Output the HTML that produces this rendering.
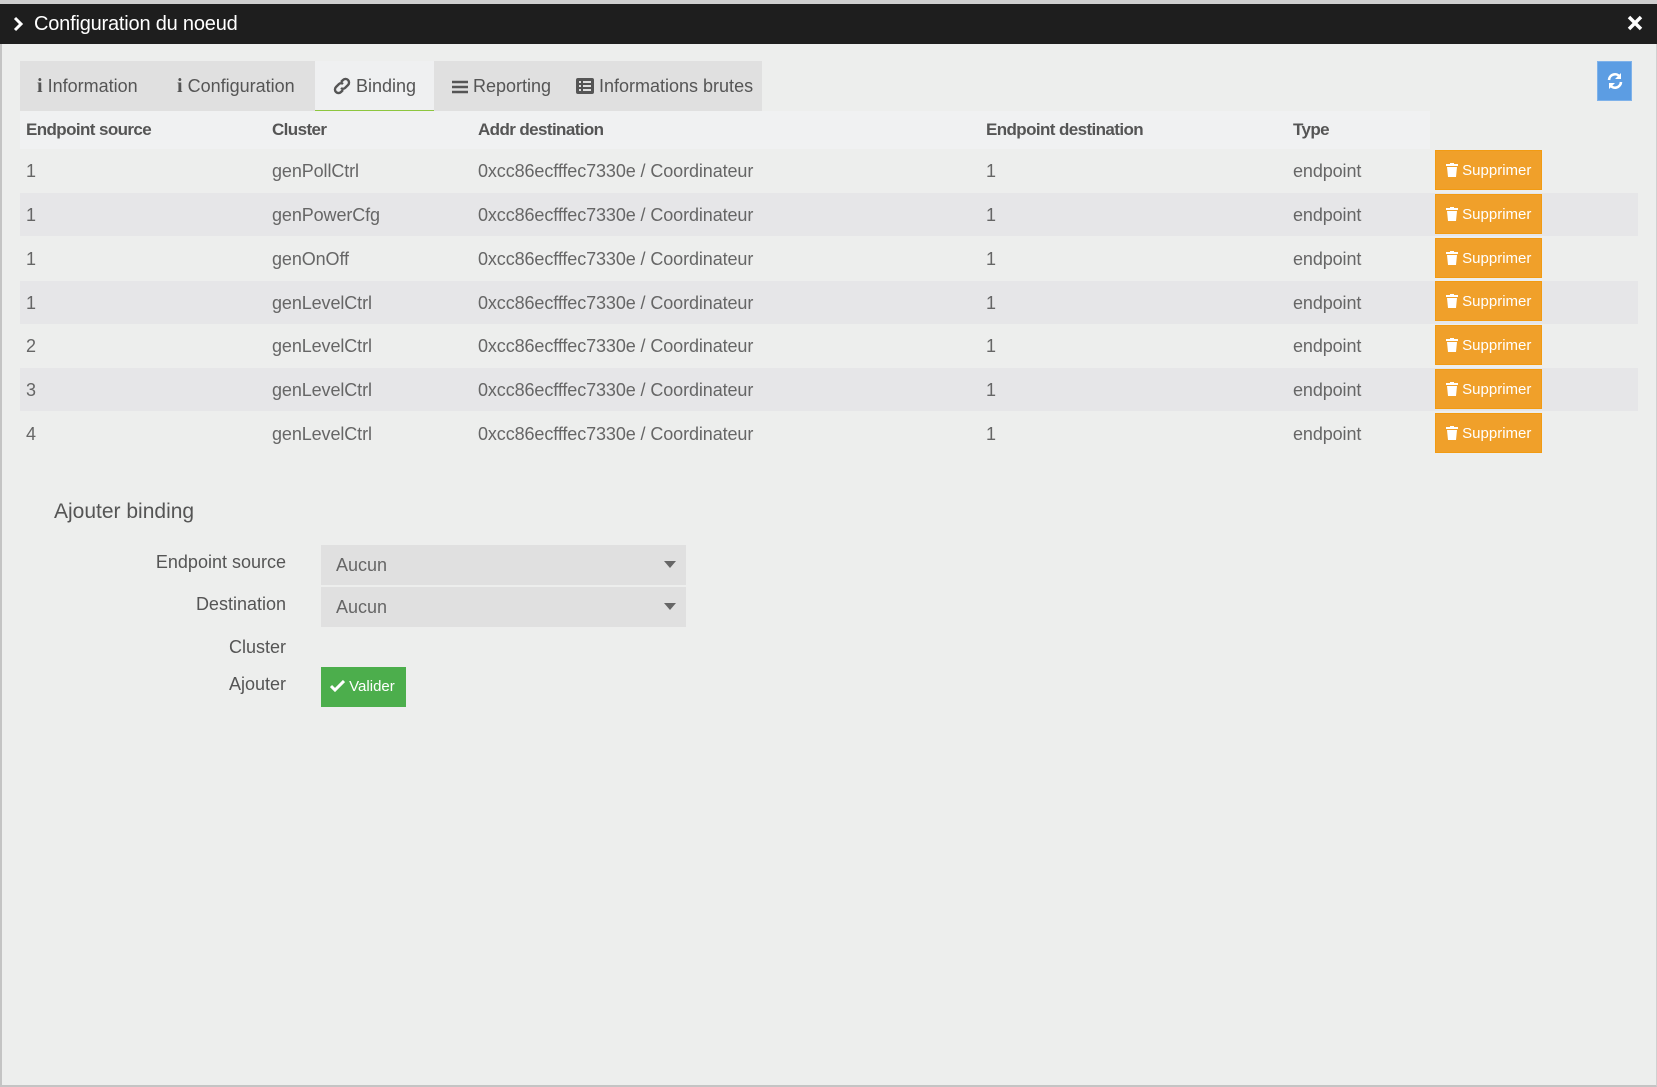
<!DOCTYPE html>
<html><head><meta charset="utf-8">
<style>
*{margin:0;padding:0;box-sizing:border-box}
html,body{width:1657px;height:1087px;overflow:hidden;background:#edeeed;font-family:"Liberation Sans",sans-serif;color:#666}
.a{position:absolute;white-space:nowrap}
#top{left:0;top:0;width:1657px;height:4px;background:#cfcfcf}
#hdr{left:0;top:4px;width:1657px;height:40px;background:#1e1e1e;color:#fff;font-size:20px;line-height:40px;padding-left:34px;letter-spacing:-0.2px}
#frame{left:0;top:44px;width:1657px;height:1043px;border-left:2px solid #c4c4c4;border-bottom:2px solid #c4c4c4;border-right:1px solid #d0d0d0}
#tabs{left:20px;top:61px;width:742px;height:50px;background:#e0e0e0}
.tab{top:61px;height:50px;line-height:50px;font-size:18px;color:#555}
#act{left:315px;top:61px;width:119px;height:51px;background:#eff0f1;border-bottom:2px solid #8dc63f}
#thead{left:20px;top:111px;width:1410px;height:38px;background:#f0f1f2}
.th{top:111px;line-height:38px;font-size:17px;font-weight:bold;color:#555;letter-spacing:-0.6px}
.stripe{left:20px;width:1618px;height:43px;background:#e6e6e8}
.td{font-size:18px;line-height:44px;color:#666;letter-spacing:-0.1px}
.btn{left:1435px;width:107px;height:40px;background:#f0a02a;border:1px solid #f29b12;color:#fff;font-size:15px;line-height:40px;padding-left:10px}
.lbl{font-size:18px;color:#555;text-align:right;width:200px;left:86px}
.sel{left:321px;width:365px;height:40px;background:#e0e0e0;font-size:18px;line-height:40px;padding-left:15px;color:#666}
.car{position:absolute;right:10px;top:16px;width:0;height:0;border-left:6px solid transparent;border-right:6px solid transparent;border-top:7px solid #666}
</style></head><body>
<div class="a" id="top"></div>
<div class="a" id="hdr">Configuration du noeud</div>
<svg class="a" style="left:12px;top:16px" width="12" height="16" viewBox="0 0 12 16"><path d="M3 2l6 6-6 6" stroke="#fff" stroke-width="3" fill="none"/></svg>
<svg class="a" style="left:1627px;top:15px" width="16" height="16" viewBox="0 0 16 16"><path d="M2 2L14 14M14 2L2 14" stroke="#fff" stroke-width="3.5"/></svg>
<div class="a" id="frame"></div>

<div class="a" id="tabs"></div>
<div class="a" id="act"></div>
<div class="a tab" style="left:37px"><b style="font-family:'Liberation Serif',serif;font-size:20px">i</b> Information</div>
<div class="a tab" style="left:177px"><b style="font-family:'Liberation Serif',serif;font-size:20px">i</b> Configuration</div>
<div class="a tab" style="left:333px">
<svg style="vertical-align:-3px" width="18" height="18" viewBox="0 0 18 18"><path d="M8 5l2-2a3 3 0 0 1 5 5l-3 3a3 3 0 0 1-4 0M10 13l-2 2a3 3 0 0 1-5-5l3-3a3 3 0 0 1 4 0" stroke="#555" stroke-width="2.4" fill="none"/></svg> Binding</div>
<div class="a tab" style="left:452px">
<svg style="vertical-align:-2px" width="16" height="14" viewBox="0 0 16 14"><path d="M0 2h16M0 7h16M0 12h16" stroke="#555" stroke-width="2.4"/></svg> Reporting</div>
<div class="a tab" style="left:576px">
<svg style="vertical-align:-2px" width="18" height="16" viewBox="0 0 18 16"><rect x="0" y="0" width="18" height="16" rx="2" fill="#555"/><path d="M3 4h2M3 8h2M3 12h2M7 4h8M7 8h8M7 12h8" stroke="#e0e0e0" stroke-width="2"/></svg> Informations brutes</div>

<div class="a" style="left:1597px;top:61px;width:35px;height:40px;background:#5c9de3;border:1px solid #7fb2ea"></div>
<svg class="a" style="left:1606px;top:72px" width="18" height="18" viewBox="0 0 18 18"><path d="M3 8a6 6 0 0 1 11-3M15 10a6 6 0 0 1-11 3" stroke="#fff" stroke-width="2.6" fill="none"/><path d="M15 1v6h-6z M3 17v-6h6z" fill="#fff"/></svg>

<div class="a" id="thead"></div>
<div class="a th" style="left:26px">Endpoint source</div>
<div class="a th" style="left:272px">Cluster</div>
<div class="a th" style="left:478px">Addr destination</div>
<div class="a th" style="left:986px">Endpoint destination</div>
<div class="a th" style="left:1293px">Type</div>

<div class="a stripe" style="top:193px"></div>
<div class="a stripe" style="top:281px"></div>
<div class="a stripe" style="top:368px"></div>

<div class="a td" style="left:26px;top:149px">1</div><div class="a td" style="left:272px;top:149px">genPollCtrl</div><div class="a td" style="left:478px;top:149px">0xcc86ecfffec7330e / Coordinateur</div><div class="a td" style="left:986px;top:149px">1</div><div class="a td" style="left:1293px;top:149px">endpoint</div>
<div class="a td" style="left:26px;top:193px">1</div><div class="a td" style="left:272px;top:193px">genPowerCfg</div><div class="a td" style="left:478px;top:193px">0xcc86ecfffec7330e / Coordinateur</div><div class="a td" style="left:986px;top:193px">1</div><div class="a td" style="left:1293px;top:193px">endpoint</div>
<div class="a td" style="left:26px;top:237px">1</div><div class="a td" style="left:272px;top:237px">genOnOff</div><div class="a td" style="left:478px;top:237px">0xcc86ecfffec7330e / Coordinateur</div><div class="a td" style="left:986px;top:237px">1</div><div class="a td" style="left:1293px;top:237px">endpoint</div>
<div class="a td" style="left:26px;top:281px">1</div><div class="a td" style="left:272px;top:281px">genLevelCtrl</div><div class="a td" style="left:478px;top:281px">0xcc86ecfffec7330e / Coordinateur</div><div class="a td" style="left:986px;top:281px">1</div><div class="a td" style="left:1293px;top:281px">endpoint</div>
<div class="a td" style="left:26px;top:324px">2</div><div class="a td" style="left:272px;top:324px">genLevelCtrl</div><div class="a td" style="left:478px;top:324px">0xcc86ecfffec7330e / Coordinateur</div><div class="a td" style="left:986px;top:324px">1</div><div class="a td" style="left:1293px;top:324px">endpoint</div>
<div class="a td" style="left:26px;top:368px">3</div><div class="a td" style="left:272px;top:368px">genLevelCtrl</div><div class="a td" style="left:478px;top:368px">0xcc86ecfffec7330e / Coordinateur</div><div class="a td" style="left:986px;top:368px">1</div><div class="a td" style="left:1293px;top:368px">endpoint</div>
<div class="a td" style="left:26px;top:412px">4</div><div class="a td" style="left:272px;top:412px">genLevelCtrl</div><div class="a td" style="left:478px;top:412px">0xcc86ecfffec7330e / Coordinateur</div><div class="a td" style="left:986px;top:412px">1</div><div class="a td" style="left:1293px;top:412px">endpoint</div>

<div class="a btn" style="top:150px"><svg width="12" height="14" viewBox="0 0 12 14" style="vertical-align:-2px"><path d="M0 1h12v2H0zM4 0h4v1H4zM1 4h10l-1 10H2z" fill="#fff"/></svg> Supprimer</div>
<div class="a btn" style="top:194px"><svg width="12" height="14" viewBox="0 0 12 14" style="vertical-align:-2px"><path d="M0 1h12v2H0zM4 0h4v1H4zM1 4h10l-1 10H2z" fill="#fff"/></svg> Supprimer</div>
<div class="a btn" style="top:238px"><svg width="12" height="14" viewBox="0 0 12 14" style="vertical-align:-2px"><path d="M0 1h12v2H0zM4 0h4v1H4zM1 4h10l-1 10H2z" fill="#fff"/></svg> Supprimer</div>
<div class="a btn" style="top:281px"><svg width="12" height="14" viewBox="0 0 12 14" style="vertical-align:-2px"><path d="M0 1h12v2H0zM4 0h4v1H4zM1 4h10l-1 10H2z" fill="#fff"/></svg> Supprimer</div>
<div class="a btn" style="top:325px"><svg width="12" height="14" viewBox="0 0 12 14" style="vertical-align:-2px"><path d="M0 1h12v2H0zM4 0h4v1H4zM1 4h10l-1 10H2z" fill="#fff"/></svg> Supprimer</div>
<div class="a btn" style="top:369px"><svg width="12" height="14" viewBox="0 0 12 14" style="vertical-align:-2px"><path d="M0 1h12v2H0zM4 0h4v1H4zM1 4h10l-1 10H2z" fill="#fff"/></svg> Supprimer</div>
<div class="a btn" style="top:413px"><svg width="12" height="14" viewBox="0 0 12 14" style="vertical-align:-2px"><path d="M0 1h12v2H0zM4 0h4v1H4zM1 4h10l-1 10H2z" fill="#fff"/></svg> Supprimer</div>

<div class="a" style="left:54px;top:500px;font-size:21px;color:#555">Ajouter binding</div>
<div class="a lbl" style="top:552px">Endpoint source</div>
<div class="a sel" style="top:545px">Aucun<span class="car"></span></div>
<div class="a lbl" style="top:594px">Destination</div>
<div class="a sel" style="top:587px">Aucun<span class="car"></span></div>
<div class="a lbl" style="top:637px">Cluster</div>
<div class="a lbl" style="top:674px">Ajouter</div>
<div class="a" style="left:321px;top:667px;width:85px;height:40px;background:#4cae4c;color:#fff;font-size:15px;line-height:40px;padding-left:9px"><svg width="15" height="12" viewBox="0 0 15 12" style="vertical-align:-1px"><path d="M1 6l4 4 9-9" stroke="#fff" stroke-width="3" fill="none"/></svg> Valider</div>
</body></html>
